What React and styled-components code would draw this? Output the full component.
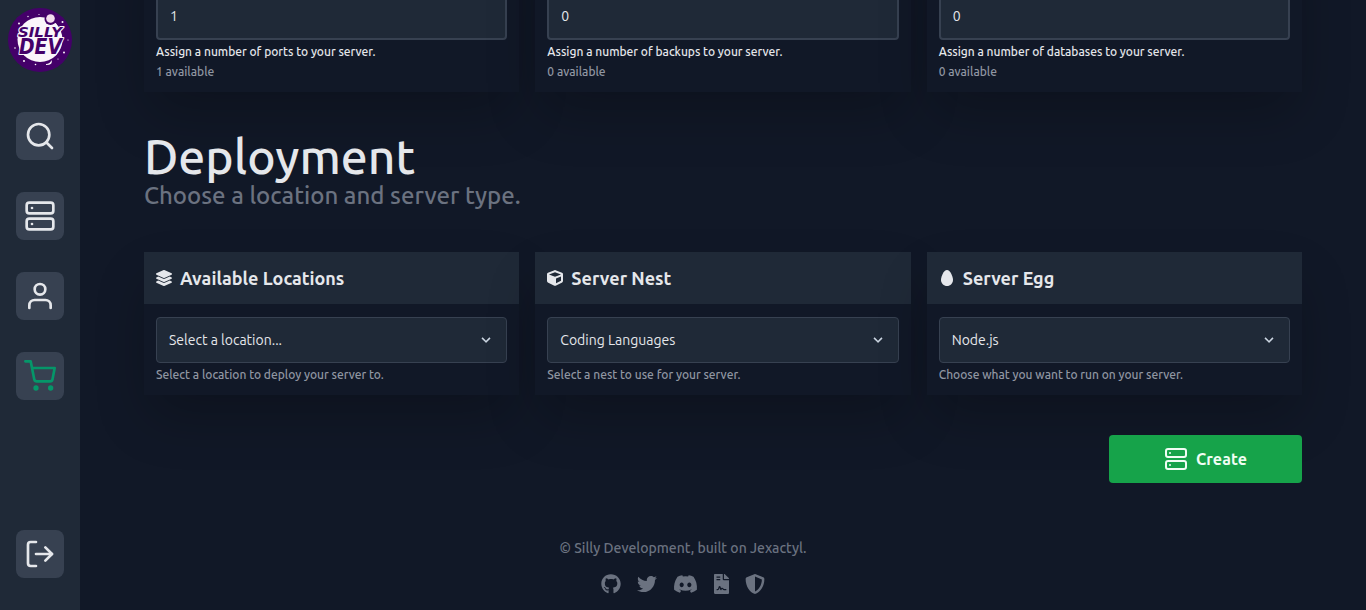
import React from "react";
import styled, { createGlobalStyle } from "styled-components";
import { FiSearch, FiServer, FiUser, FiShoppingCart, FiLogOut } from "react-icons/fi";
import { FaLayerGroup, FaCube, FaEgg, FaGithub, FaTwitter, FaFileContract, FaShieldAlt } from "react-icons/fa";
import { FaDiscord } from "react-icons/fa6";

const GlobalStyle = createGlobalStyle`
  *, *::before, *::after { box-sizing: border-box; }
  html, body { margin: 0; padding: 0; background: #111827; }
  body { font-family: Ubuntu, "Noto Sans", "Open Sans", sans-serif; font-weight: 500; color: #e5e7eb; overflow: hidden; }
  h1, h2, h3, p { margin: 0; font-weight: 500; }
  svg { display: block; flex-shrink: 0; }
`;

const Page = styled.div`
  display: flex;
  height: 610px;
  overflow: hidden;
`;

const Sidebar = styled.nav`
  display: flex;
  flex-direction: column;
  align-items: center;
  width: 80px;
  flex-shrink: 0;
  padding: 8px 0 32px;
  background: #1f2937;
`;

const NavList = styled.div`
  display: flex;
  flex-direction: column;
  gap: 32px;
  margin: 40px 0 auto;
`;

const NavButton = styled.a`
  display: flex;
  align-items: center;
  justify-content: center;
  width: 48px;
  height: 48px;
  border-radius: 8px;
  background: #374151;
  color: ${(p) => (p.$active ? "#059669" : "#e5e7eb")};
`;

const Main = styled.main`
  flex: 1;
  min-width: 0;
  padding: 0 64px;
`;

const CardRow = styled.section`
  display: grid;
  grid-template-columns: repeat(3, minmax(0, 1fr));
  gap: 16px;
  margin-top: ${(p) => p.$top}px;
`;

const Card = styled.article`
  background: #111827;
  box-shadow: 0 26px 54px -5px rgba(0, 0, 0, 0.24);
`;

const CardHeader = styled.header`
  display: flex;
  align-items: center;
  gap: 8px;
  height: 52px;
  padding: 0 12px;
  background: #1f2937;
`;

const CardTitle = styled.h3`
  font-size: 18px;
  line-height: 28px;
  font-weight: 600;
`;

const CardBody = styled.div`
  padding: 13px 12px 10px;
`;

const NumberField = styled.div`
  display: flex;
  align-items: center;
  height: 50px;
  padding: 2px 12px 0;
  border: 2px solid #374151;
  border-radius: 4px;
  background: #1f2937;
  font-size: 14px;
  font-weight: 400;
`;

const SelectField = styled.div`
  display: flex;
  align-items: center;
  justify-content: space-between;
  height: 46px;
  padding: 0 12px;
  border: 1px solid #374151;
  border-radius: 4px;
  background: #1f2937;
  font-size: 14px;
  font-weight: 400;
`;

const Hint = styled.p`
  height: 20px;
  margin-top: ${(p) => (p.$first ? 2 : 0)}px;
  font-size: 12px;
  line-height: 20px;
  color: ${(p) => (p.$bright ? "#e5e7eb" : "#9096a2")};
`;

const Heading = styled.h1`
  margin-top: 40px;
  height: 48px;
  font-size: 48px;
  line-height: 48px;
  color: #e5e7eb;
`;

const Subheading = styled.h2`
  height: 32px;
  font-size: 24px;
  line-height: 32px;
  color: #6b7280;
`;

const Actions = styled.div`
  display: flex;
  justify-content: flex-end;
  margin-top: 40px;
`;

const CreateButton = styled.button`
  display: flex;
  align-items: center;
  justify-content: center;
  gap: 8px;
  width: 193px;
  height: 48px;
  padding: 0;
  border: 0;
  border-radius: 4px;
  background: #16a34a;
  color: #f0fdf4;
  font-family: inherit;
  font-size: 16px;
  font-weight: 600;
  letter-spacing: 0.1px;
`;

const Footer = styled.footer`
  display: flex;
  flex-direction: column;
  align-items: center;
  width: 1366px;
  margin: 55px 0 0 -144px;
  color: #6b7280;
`;

const Copyright = styled.p`
  font-size: 14px;
  line-height: 20px;
`;

const SocialLinks = styled.div`
  display: flex;
  align-items: center;
  gap: 16px;
  margin-top: 16px;
`;

const SocialLink = styled.a`
  width: ${(p) => p.$width}px;
  height: 20px;

  svg {
    width: 100%;
    height: 100%;
  }
`;

function Logo() {
  return (
    <svg width="64" height="64" viewBox="0 0 64 64">
      <circle cx="32" cy="32" r="32" fill="#440069" />
      <circle cx="32" cy="31.5" r="22.5" fill="#faf5fa" />
      <g fill="#faf5fa">
        <circle cx="11" cy="15.5" r="1" />
        <circle cx="20" cy="8.5" r=".7" />
        <circle cx="31" cy="6.5" r=".6" />
        <circle cx="54.5" cy="14" r="1" />
        <circle cx="7" cy="40" r=".8" />
        <circle cx="16" cy="53" r="1" />
        <circle cx="27.5" cy="56.5" r=".8" />
        <circle cx="56" cy="44.5" r="1" />
        <circle cx="50" cy="51" r=".6" />
        <circle cx="60" cy="32" r=".6" />
        <path d="M38 56q4 0 5.500-4q2 5-5.500 5z" />
      </g>
      <circle cx="42.5" cy="11" r="6" fill="#440069" />
      <circle cx="42.500" cy="10.5" r="4.3" fill="#f3dcee" />
      <path d="M47 15.5l4 6" stroke="#faf5fa" strokeWidth="1.5" />
      <g
        fontFamily="DejaVu Sans, sans-serif"
        fontWeight="700"
        fontStyle="italic"
        paintOrder="stroke"
        strokeLinejoin="round"
        fill="#440069"
        stroke="#faf5fa"
        strokeWidth="2"
      >
        <text x="10" y="28.500" fontSize="13.5" textLength="44" lengthAdjust="spacingAndGlyphs">SILLY</text>
        <text x="11" y="45.500" fontSize="20.5" textLength="43" lengthAdjust="spacingAndGlyphs">DEV</text>
      </g>
    </svg>
  );
}

function Chevron() {
  return (
    <svg width="16" height="16" viewBox="0 0 20 20" fill="#cbd5e1">
      <path d="M9.293 12.950l.707.707L15.657 8l-1.414-1.414L10 10.828 5.757 6.586 4.343 8z" />
    </svg>
  );
}

const limits = [
  { value: "1", hint: "Assign a number of ports to your server.", available: "1 available" },
  { value: "0", hint: "Assign a number of backups to your server.", available: "0 available" },
  { value: "0", hint: "Assign a number of databases to your server.", available: "0 available" },
];

const choices = [
  { icon: FaLayerGroup, title: "Available Locations", value: "Select a location...", hint: "Select a location to deploy your server to." },
  { icon: FaCube, title: "Server Nest", value: "Coding Languages", hint: "Select a nest to use for your server." },
  { icon: FaEgg, title: "Server Egg", value: "Node.js", hint: "Choose what you want to run on your server." },
];

const socials = [
  { icon: FaGithub, width: 20 },
  { icon: FaTwitter, width: 20 },
  { icon: FaDiscord, width: 25 },
  { icon: FaFileContract, width: 15 },
  { icon: FaShieldAlt, width: 20 },
];

export default function App() {
  return (
    <>
      <GlobalStyle />
      <Page>
        <Sidebar>
          <Logo />
          <NavList>
            <NavButton><FiSearch size={32} /></NavButton>
            <NavButton><FiServer size={32} /></NavButton>
            <NavButton><FiUser size={32} /></NavButton>
            <NavButton $active><FiShoppingCart size={32} /></NavButton>
          </NavList>
          <NavButton><FiLogOut size={32} /></NavButton>
        </Sidebar>
        <Main>
          <CardRow $top={-75}>
            {limits.map((item) => (
              <Card key={item.hint}>
                <CardHeader />
                <CardBody>
                  <NumberField>{item.value}</NumberField>
                  <Hint $first $bright>{item.hint}</Hint>
                  <Hint>{item.available}</Hint>
                </CardBody>
              </Card>
            ))}
          </CardRow>
          <Heading>Deployment</Heading>
          <Subheading>Choose a location and server type.</Subheading>
          <CardRow $top={40}>
            {choices.map(({ icon: Icon, title, value, hint }) => (
              <Card key={title}>
                <CardHeader>
                  <Icon size={16} />
                  <CardTitle>{title}</CardTitle>
                </CardHeader>
                <CardBody>
                  <SelectField>
                    {value}
                    <Chevron />
                  </SelectField>
                  <Hint $first>{hint}</Hint>
                </CardBody>
              </Card>
            ))}
          </CardRow>
          <Actions>
            <CreateButton>
              <FiServer size={24} />
              Create
            </CreateButton>
          </Actions>
          <Footer>
            <Copyright>© Silly Development, built on Jexactyl.</Copyright>
            <SocialLinks>
              {socials.map(({ icon: Icon, width }, index) => (
                <SocialLink key={index} $width={width}>
                  <Icon />
                </SocialLink>
              ))}
            </SocialLinks>
          </Footer>
        </Main>
      </Page>
    </>
  );
}
